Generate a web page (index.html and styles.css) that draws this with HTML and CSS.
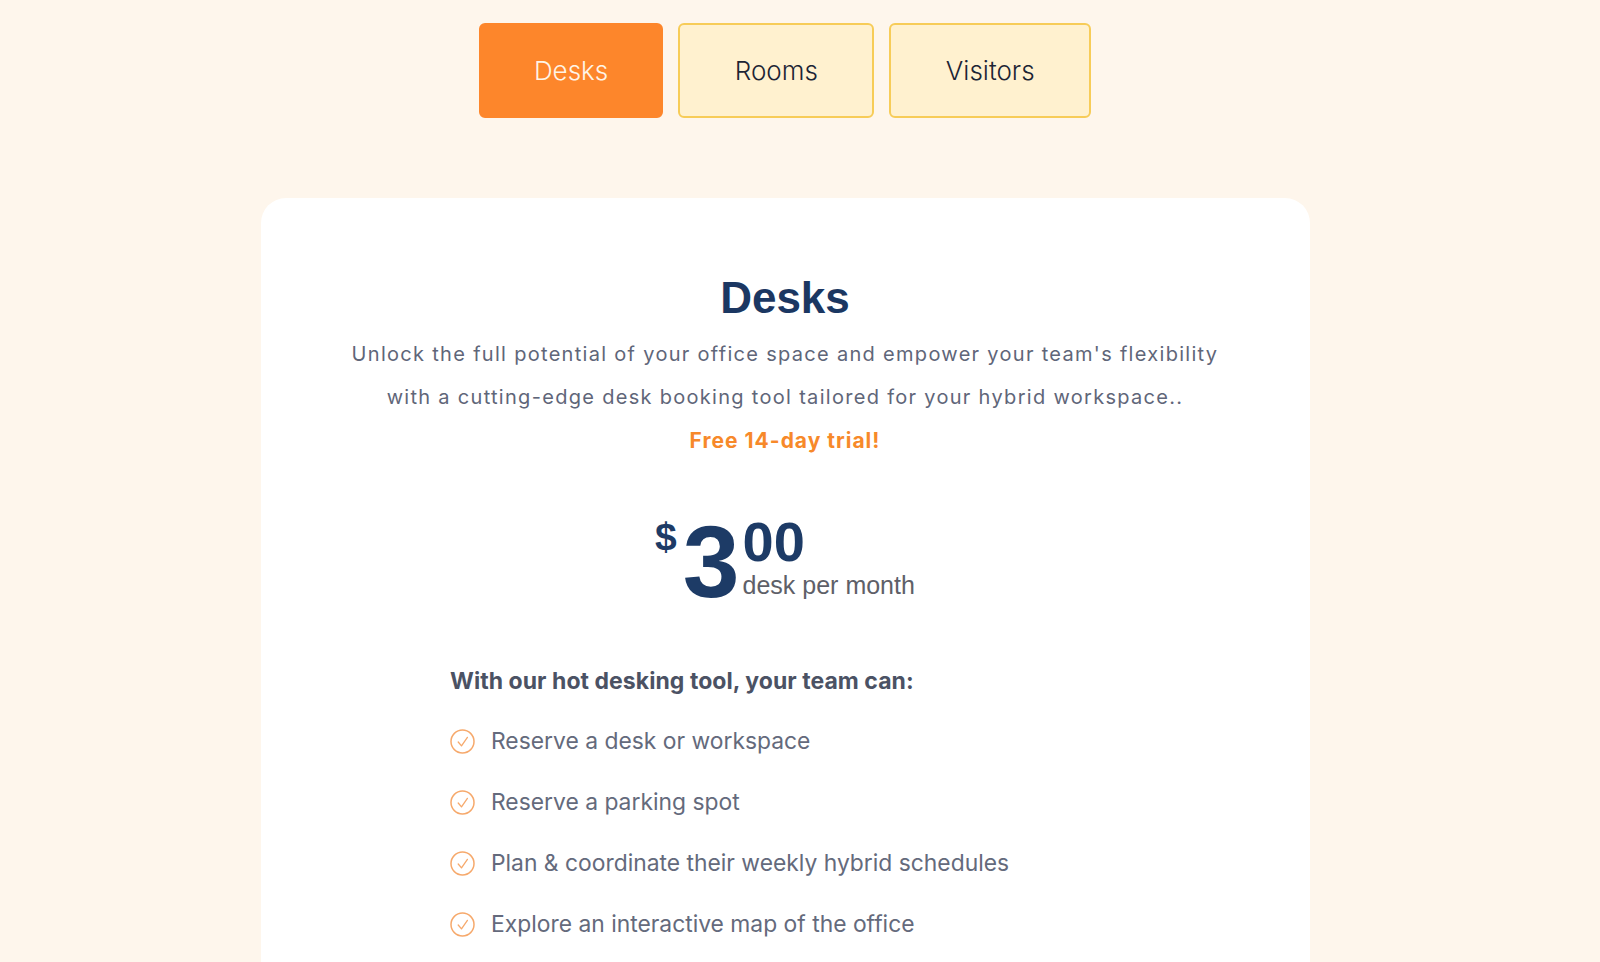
FILE: index.html
```html
<!DOCTYPE html>
<html lang="en">
<head>
<meta charset="utf-8">
<title>Pricing - Desks</title>
<link rel="stylesheet" href="styles.css">
</head>
<body>
<div class="page">
  <nav class="tabs">
    <button class="tab tab-active">Desks</button>
    <button class="tab">Rooms</button>
    <button class="tab">Visitors</button>
  </nav>

  <section class="card">
    <h1 class="title">Desks</h1>
    <p class="desc">Unlock the full potential of your office space and empower your team's flexibility with a cutting-edge desk booking tool tailored for your hybrid workspace..</p>
    <p class="trial">Free 14-day trial!</p>

    <div class="price">
      <span class="cur">$</span>
      <span class="int">3</span>
      <div class="price-col">
        <span class="cents">00</span>
        <span class="unit">desk per month</span>
      </div>
    </div>

    <div class="features">
      <h2 class="feat-head">With our hot desking tool, your team can:</h2>
      <ul class="feat-list">
        <li class="feat">
          <svg class="check" viewBox="0 0 25 25" width="25" height="25"><circle cx="12.5" cy="12.5" r="11.5" fill="none" stroke="#F6A96C" stroke-width="1.5"/><path d="M8.2 13 L11.5 16.9 L17.4 8.4" fill="none" stroke="#F6A96C" stroke-width="1.3" stroke-linecap="round" stroke-linejoin="round"/></svg>
          <span>Reserve a desk or workspace</span>
        </li>
        <li class="feat">
          <svg class="check" viewBox="0 0 25 25" width="25" height="25"><circle cx="12.5" cy="12.5" r="11.5" fill="none" stroke="#F6A96C" stroke-width="1.5"/><path d="M8.2 13 L11.5 16.9 L17.4 8.4" fill="none" stroke="#F6A96C" stroke-width="1.3" stroke-linecap="round" stroke-linejoin="round"/></svg>
          <span>Reserve a parking spot</span>
        </li>
        <li class="feat">
          <svg class="check" viewBox="0 0 25 25" width="25" height="25"><circle cx="12.5" cy="12.5" r="11.5" fill="none" stroke="#F6A96C" stroke-width="1.5"/><path d="M8.2 13 L11.5 16.9 L17.4 8.4" fill="none" stroke="#F6A96C" stroke-width="1.3" stroke-linecap="round" stroke-linejoin="round"/></svg>
          <span>Plan &amp; coordinate their weekly hybrid schedules</span>
        </li>
        <li class="feat">
          <svg class="check" viewBox="0 0 25 25" width="25" height="25"><circle cx="12.5" cy="12.5" r="11.5" fill="none" stroke="#F6A96C" stroke-width="1.5"/><path d="M8.2 13 L11.5 16.9 L17.4 8.4" fill="none" stroke="#F6A96C" stroke-width="1.3" stroke-linecap="round" stroke-linejoin="round"/></svg>
          <span>Explore an interactive map of the office</span>
        </li>
      </ul>
    </div>
  </section>
</div>
</body>
</html>
```

FILE: styles.css
```css
* { box-sizing: border-box; }

html, body {
  margin: 0;
  padding: 0;
  background: #FEF6EC;
  font-family: Inter, "Noto Sans", sans-serif;
  overflow: hidden;
}

.page {
  width: 1570px;
  padding-top: 23px;
  display: flex;
  flex-direction: column;
  align-items: center;
}

.tabs {
  display: flex;
  gap: 15px;
}

.tab {
  height: 95px;
  padding: 0 54.5px;
  border: 2px solid #F7CC58;
  border-radius: 6px;
  background: #FFF1CF;
  color: #1C2434;
  font-family: Inter, sans-serif;
  font-size: 26px;
  font-weight: 300;
  cursor: pointer;
}

.tab-active {
  padding: 0 53px;
  background: #FD862B;
  border-color: #FD862B;
  color: #FFF4E6;
}

.card {
  margin-top: 80px;
  width: 1049px;
  min-height: 800px;
  background: #FFFFFF;
  border-radius: 25px 25px 0 0;
  padding-top: 75px;
  display: flex;
  flex-direction: column;
  align-items: center;
}

.title {
  margin: 0;
  font-family: "Liberation Sans", Arial, sans-serif;
  font-size: 44px;
  line-height: 50px;
  font-weight: 700;
  color: #1B3762;
}

.desc {
  margin: 10px 0 0;
  max-width: 900px;
  text-align: center;
  font-size: 20px;
  line-height: 43px;
  letter-spacing: 1.3px;
  color: #5F6679;
}

.trial {
  margin: 0;
  font-size: 21px;
  line-height: 43px;
  letter-spacing: 1px;
  font-weight: 700;
  color: #F7892A;
}

.price {
  margin-top: 49px;
  display: flex;
  align-items: flex-start;
  font-family: "Liberation Sans", Arial, sans-serif;
  color: #1D3B66;
}

.cur {
  margin-top: 6px;
  margin-right: 6px;
  font-size: 39px;
  line-height: 39px;
  font-weight: 700;
}

.int {
  font-size: 102px;
  line-height: 102px;
  font-weight: 700;
}

.price-col {
  display: flex;
  flex-direction: column;
  margin-left: 3px;
}

.cents {
  margin-top: 3px;
  font-size: 56px;
  line-height: 56px;
  font-weight: 700;
}

.unit {
  margin-top: 3px;
  font-size: 25px;
  line-height: 25px;
  color: #5E6068;
}

.features {
  margin-top: 53px;
  width: 670px;
}

.feat-head {
  margin: 0;
  font-size: 23px;
  line-height: 30px;
  letter-spacing: 0.05px;
  font-weight: 700;
  color: #4B5264;
}

.feat-list {
  list-style: none;
  margin: 30px 0 0;
  padding: 0;
  display: flex;
  flex-direction: column;
  gap: 31px;
}

.feat {
  display: flex;
  align-items: center;
  gap: 16px;
  height: 30px;
  font-size: 22.85px;
  line-height: 30px;
  color: #646A7C;
}

.check {
  flex: none;
}
```
